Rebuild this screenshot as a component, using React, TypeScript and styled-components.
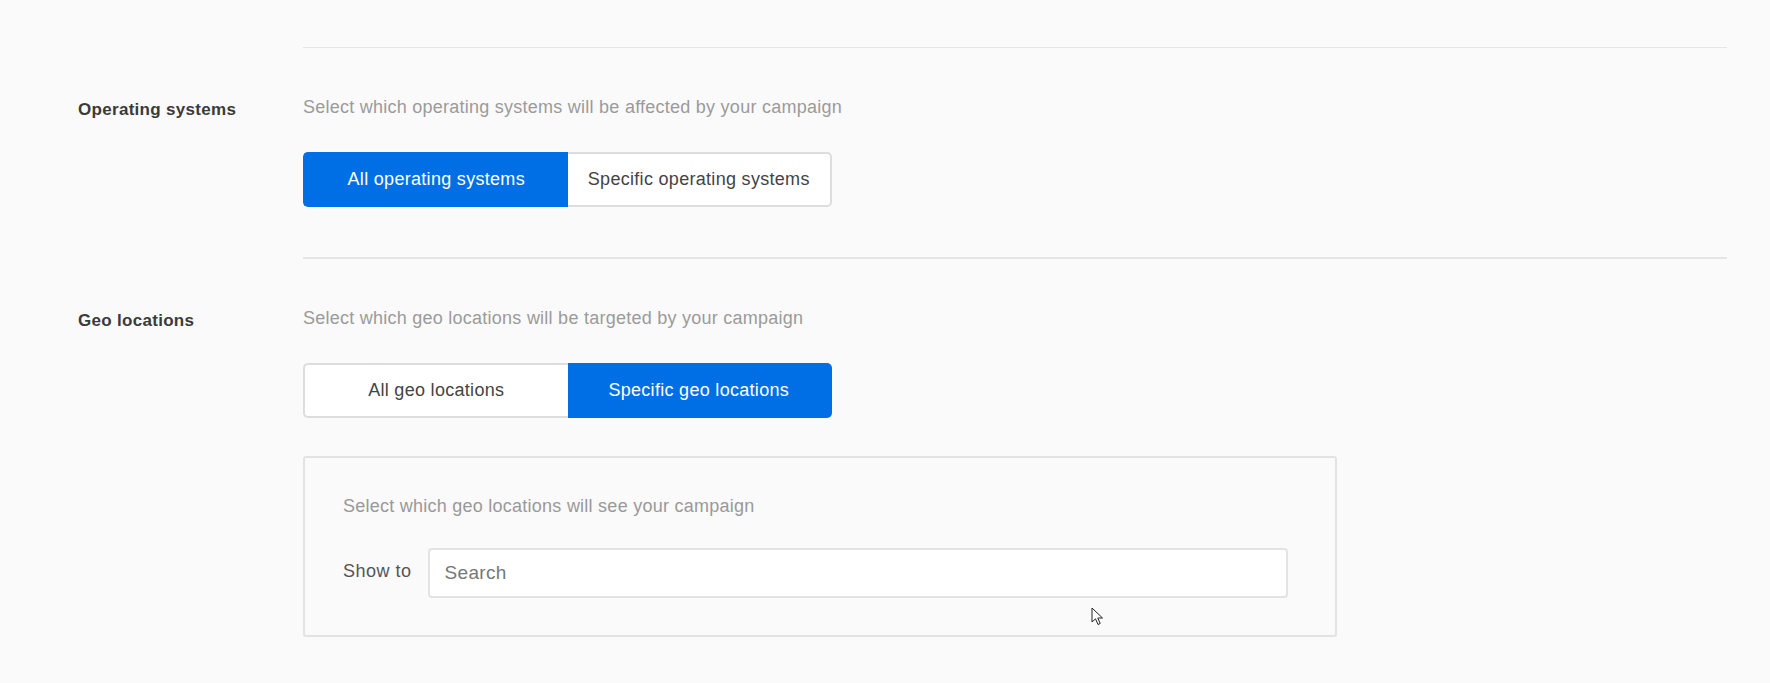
import React from 'react';
import styled, { createGlobalStyle } from 'styled-components';

const GlobalStyle = createGlobalStyle`
  html, body {
    margin: 0;
    padding: 0;
    background: #fafafa;
  }
  body {
    font-family: "Liberation Sans", Arial, sans-serif;
    letter-spacing: 0.25px;
    -webkit-font-smoothing: antialiased;
  }
  * {
    box-sizing: border-box;
  }
`;

const Page = styled.div`
  width: 1770px;
  height: 683px;
  padding: 47px 43px 0 78px;
  background: #fafafa;
  overflow: hidden;
`;

const Section = styled.section<{ $divider: number }>`
  display: grid;
  grid-template-columns: 225px 1fr;
  padding-bottom: 50px;

  & > div:last-child {
    border-top: ${({ $divider }) => $divider}px solid #e5e5e5;
  }

  & > h3 {
    margin-top: ${({ $divider }) => $divider}px;
  }
`;

const Label = styled.h3`
  margin: 0;
  padding-top: 51px;
  font-size: 17px;
  line-height: 22px;
  font-weight: 700;
  letter-spacing: 0.3px;
  color: #3a3a3a;
`;

const Body = styled.div`
  padding-top: 48px;
  display: flex;
  flex-direction: column;
  align-items: flex-start;
`;

const Hint = styled.p`
  margin: 0;
  font-size: 18px;
  line-height: 22px;
  color: #9b9b9b;
`;

const Toggle = styled.div`
  display: flex;
  margin-top: 34px;
  width: 529px;
  height: 55px;
`;

const ToggleButton = styled.button<{ $active: boolean; $side: 'left' | 'right' }>`
  flex: 1;
  height: 100%;
  margin: 0;
  padding: 0;
  font-family: inherit;
  font-size: 18px;
  letter-spacing: 0.3px;
  cursor: pointer;
  background: ${({ $active }) => ($active ? '#006fe6' : '#ffffff')};
  color: ${({ $active }) => ($active ? '#ffffff' : '#444444')};
  border: 2px solid ${({ $active }) => ($active ? '#006fe6' : '#dddddd')};
  border-radius: ${({ $side }) => ($side === 'left' ? '5px 0 0 5px' : '0 5px 5px 0')};
  ${({ $side }) => ($side === 'left' ? 'border-right: none;' : 'border-left: none;')}
`;

const Panel = styled.div`
  position: relative;
  margin-top: 38px;
  width: 1034px;
  padding: 37px 47px 37px 38px;
  border: 2px solid #e3e3e3;
  border-radius: 3px;
`;

const PanelHint = styled(Hint)`
  color: #999999;
`;

const SearchRow = styled.div`
  display: flex;
  align-items: center;
  gap: 16px;
  margin-top: 31px;
`;

const SearchLabel = styled.label`
  font-size: 18px;
  line-height: 22px;
  letter-spacing: 0.5px;
  color: #555555;
  margin-top: -4px;
`;

const SearchInput = styled.input`
  flex: 1;
  height: 50px;
  padding: 0 15px;
  font-family: inherit;
  font-size: 19px;
  letter-spacing: 0.3px;
  color: #333333;
  background: #ffffff;
  border: 2px solid #e3e3e3;
  border-radius: 4px;
  outline: none;

  &::placeholder {
    color: #777777;
  }
`;

const Pointer = styled.svg`
  position: absolute;
  left: 786px;
  top: 149px;
  width: 13px;
  height: 19px;
`;

interface TargetOption {
  label: string;
}

interface TargetSectionProps {
  title: string;
  hint: string;
  options: [TargetOption, TargetOption];
  active: 0 | 1;
  divider: number;
  children?: React.ReactNode;
}

const TargetSection: React.FC<TargetSectionProps> = ({ title, hint, options, active, divider, children }) => (
  <Section $divider={divider}>
    <Label>{title}</Label>
    <Body>
      <Hint>{hint}</Hint>
      <Toggle>
        {options.map((opt, i) => (
          <ToggleButton key={opt.label} $active={i === active} $side={i === 0 ? 'left' : 'right'}>
            {opt.label}
          </ToggleButton>
        ))}
      </Toggle>
      {children}
    </Body>
  </Section>
);

const App: React.FC = () => (
  <>
    <GlobalStyle />
    <Page>
      <TargetSection
        title="Operating systems"
        hint="Select which operating systems will be affected by your campaign"
        options={[{ label: 'All operating systems' }, { label: 'Specific operating systems' }]}
        active={0}
        divider={1}
      />
      <TargetSection
        title="Geo locations"
        hint="Select which geo locations will be targeted by your campaign"
        options={[{ label: 'All geo locations' }, { label: 'Specific geo locations' }]}
        active={1}
        divider={2}
      >
        <Panel>
          <PanelHint>Select which geo locations will see your campaign</PanelHint>
          <SearchRow>
            <SearchLabel htmlFor="geo-search">Show to</SearchLabel>
            <SearchInput id="geo-search" placeholder="Search" />
          </SearchRow>
          <Pointer viewBox="0 0 13 19">
            <path
              d="M1 1 L1 15 L4.5 11.8 L7 17.5 L9.2 16.5 L6.8 11 L11.5 11 Z"
              fill="#ffffff"
              stroke="#222222"
              strokeWidth="1"
              strokeLinejoin="round"
            />
          </Pointer>
        </Panel>
      </TargetSection>
    </Page>
  </>
);

export default App;
